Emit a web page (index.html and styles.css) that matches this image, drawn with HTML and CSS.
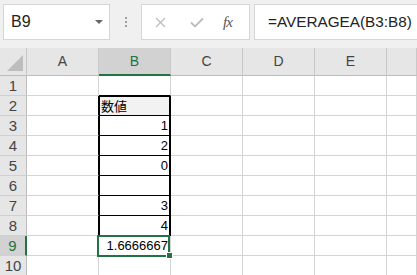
FILE: index.html
```html
<!DOCTYPE html>
<html lang="ja">
<head>
  <meta charset="UTF-8">
  <title>AVERAGEA</title>
  <link rel="stylesheet" href="styles.css">
</head>
<body>
  <div class="toolbar">
    <div class="namebox"><span>B9</span><span class="caret"></span></div>
    <div class="grip"><i></i><i></i><i></i></div>
    <div class="fxbtns">
      <svg class="ico cancel" width="11" height="11" viewBox="0 0 11 11"><path d="M1 1 L10 10 M10 1 L1 10" stroke="#bdbdbd" stroke-width="1.3" fill="none"/></svg>
      <svg class="ico ok" width="14" height="11" viewBox="0 0 14 11"><path d="M1 5.5 L5 9.5 L13 1.5" stroke="#bdbdbd" stroke-width="1.9" fill="none"/></svg>
      <span class="fx">fx</span>
    </div>
    <div class="formula">=AVERAGEA(B3:B8)</div>
  </div>

  <div class="sheet">
    <div class="row head">
      <div class="corner"><span class="tri"></span></div>
      <div>A</div><div class="sel">B</div><div>C</div><div>D</div><div>E</div><div></div>
    </div>
    <div class="row">
      <div class="rh">1</div><div></div><div class="top"></div><div></div><div></div><div></div><div></div>
    </div>
    <div class="row">
      <div class="rh">2</div><div class="kl"></div><div class="box first label">数値</div><div></div><div></div><div></div><div></div>
    </div>
    <div class="row">
      <div class="rh">3</div><div class="kl"></div><div class="box num">1</div><div></div><div></div><div></div><div></div>
    </div>
    <div class="row">
      <div class="rh">4</div><div class="kl"></div><div class="box num">2</div><div></div><div></div><div></div><div></div>
    </div>
    <div class="row">
      <div class="rh">5</div><div class="kl"></div><div class="box num">0</div><div></div><div></div><div></div><div></div>
    </div>
    <div class="row">
      <div class="rh">6</div><div class="kl"></div><div class="box num"></div><div></div><div></div><div></div><div></div>
    </div>
    <div class="row">
      <div class="rh">7</div><div class="kl"></div><div class="box num">3</div><div></div><div></div><div></div><div></div>
    </div>
    <div class="row">
      <div class="rh">8</div><div class="kl"></div><div class="box num">4</div><div></div><div></div><div></div><div></div>
    </div>
    <div class="row">
      <div class="rh sel">9</div><div></div><div class="num active">1.6666667<span class="handle"></span></div><div></div><div></div><div></div><div></div>
    </div>
    <div class="row">
      <div class="rh">10</div><div></div><div></div><div></div><div></div><div></div><div></div>
    </div>
  </div>
</body>
</html>
```

FILE: styles.css
```css
body {
  margin: 0;
  background: #fff;
  font-family: "Liberation Sans", Arial, "Noto Sans CJK JP", sans-serif;
  overflow: hidden;
}

/* formula bar */
.toolbar {
  display: flex;
  align-items: flex-start;
  height: 48px;
  padding-top: 4px;
  box-sizing: border-box;
  background: #f0f0f0;
}
.namebox {
  margin-left: 3px;
  width: 107px;
  height: 36px;
  box-sizing: border-box;
  border: 1px solid #d6d6d6;
  background: #fff;
  display: flex;
  align-items: center;
  justify-content: space-between;
  padding: 0 6px 0 7px;
  font-size: 16px;
  color: #222;
}
.caret {
  width: 0;
  height: 0;
  border-left: 4px solid transparent;
  border-right: 4px solid transparent;
  border-top: 4px solid #666;
}
.grip {
  width: 31px;
  height: 36px;
  display: flex;
  flex-direction: column;
  align-items: center;
  justify-content: center;
  gap: 2px;
}
.grip i {
  width: 2px;
  height: 2px;
  background: #a0a0a0;
}
.fxbtns {
  width: 109px;
  height: 36px;
  box-sizing: border-box;
  border: 1px solid #d6d6d6;
  background: #fff;
  display: flex;
  align-items: center;
  padding-left: 13px;
}
.cancel {
  margin-right: 24px;
}
.ok {
  margin-right: 19px;
}
.fx {
  font-family: "Liberation Serif", serif;
  font-style: italic;
  font-size: 15px;
  color: #555;
  letter-spacing: -1px;
}
.formula {
  margin-left: 4px;
  flex: 1;
  height: 36px;
  box-sizing: border-box;
  border: 1px solid #d6d6d6;
  border-right: 0;
  background: #fff;
  display: flex;
  align-items: center;
  padding-left: 13px;
  font-size: 15.3px;
  color: #222;
}

/* grid */
.row {
  display: grid;
  grid-template-columns: 27px repeat(5, 72px) 1fr;
  height: 20px;
}
.row > div {
  box-sizing: border-box;
  border-right: 1px solid #d4d4d4;
  border-bottom: 1px solid #d4d4d4;
  padding: 0 2px;
  font-size: 13px;
  line-height: 19px;
  color: #000;
  white-space: nowrap;
  overflow: hidden;
}
.row.head {
  height: 28px;
}
.head > div {
  background: #e6e6e6;
  text-align: center;
  line-height: 27px;
  font-size: 14px;
  color: #444;
  border-bottom-color: #bdbdbd;
  border-right-color: #c9c9c9;
}
.head > div.sel {
  background: #d2d2d2;
  color: #217346;
  border-bottom: 2px solid #217346;
}
.corner {
  display: flex;
  align-items: flex-end;
  justify-content: flex-end;
  padding: 0 3px 4px 0 !important;
}
.tri {
  width: 0;
  height: 0;
  border-left: 16px solid transparent;
  border-bottom: 16px solid #bdbdbd;
}
.row > .rh {
  background: #e6e6e6;
  text-align: center;
  font-size: 15px;
  color: #444;
  border-right-color: #bdbdbd;
  border-bottom-color: #d0d0d0;
  padding: 0;
}
.row > .rh.sel {
  background: #d2d2d2;
  color: #217346;
  border-right: 2px solid #217346;
}

/* cells */
.num {
  text-align: right;
}
.row > .top {
  border-bottom-color: #000;
}
.row > .kl {
  border-right-color: #000;
}
.row > .box {
  border-right-color: #000;
  border-bottom-color: #000;
  box-shadow: inset 1px 0 0 #000, inset -1px 0 0 #000;
}
.row > .box.first {
  box-shadow: inset 1px 0 0 #000, inset -1px 0 0 #000, inset 0 1px 0 #000;
}
.label {
  background: #f2f2f2;
  font-family: "Noto Sans CJK JP", sans-serif;
}
.row > .active {
  position: relative;
  overflow: visible;
}
.active::after {
  content: "";
  position: absolute;
  top: -1px;
  left: -2px;
  right: 0;
  bottom: -2px;
  border: 2px solid #217346;
}
.handle {
  position: absolute;
  right: -3px;
  bottom: -4px;
  width: 5px;
  height: 5px;
  background: #217346;
  border: 1px solid #fff;
  z-index: 1;
}
```
